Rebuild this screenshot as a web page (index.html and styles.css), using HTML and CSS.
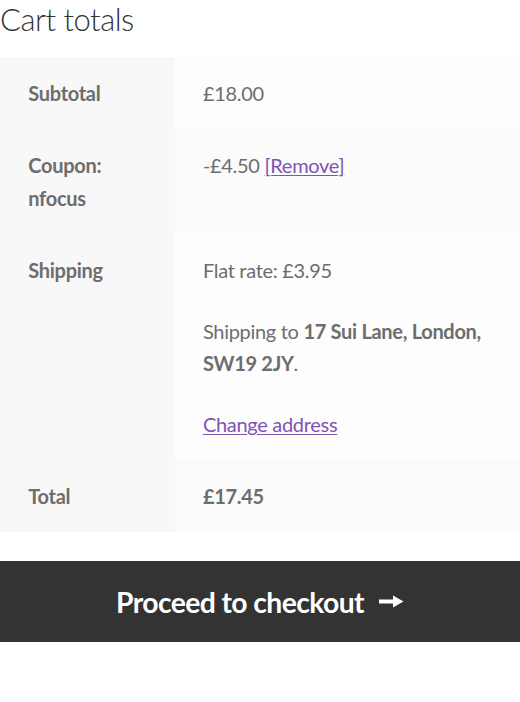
FILE: index.html
```html
<!DOCTYPE html>
<html lang="en">
<head>
<meta charset="utf-8">
<title>Cart totals</title>
<link rel="stylesheet" href="styles.css">
</head>
<body>
<div class="cart-totals">
  <h2 class="cart-title">Cart totals</h2>
  <table class="totals-table">
    <tbody>
      <tr class="row row-odd">
        <th class="label">Subtotal</th>
        <td class="value">£18.00</td>
      </tr>
      <tr class="row row-even">
        <th class="label">Coupon: nfocus</th>
        <td class="value">-£4.50 <a class="link" href="#">[Remove]</a></td>
      </tr>
      <tr class="row row-odd">
        <th class="label">Shipping</th>
        <td class="value">
          <p class="para">Flat rate: £3.95</p>
          <p class="para">Shipping to <strong class="strong">17 Sui Lane, London,</strong> <strong class="strong">SW19 2JY</strong>.</p>
          <p class="para para-last"><a class="link" href="#">Change address</a></p>
        </td>
      </tr>
      <tr class="row row-even">
        <th class="label">Total</th>
        <td class="value"><strong class="strong">£17.45</strong></td>
      </tr>
    </tbody>
  </table>
  <a class="checkout-button" href="#">
    <span class="checkout-text">Proceed to checkout</span>
    <svg class="checkout-arrow" width="25" height="13" viewBox="0 0 25 13" aria-hidden="true">
      <rect x="0" y="4.5" width="15" height="4" fill="#ffffff"/>
      <polygon points="14,0.5 24.5,6.5 14,12.5" fill="#ffffff"/>
    </svg>
  </a>
</div>
</body>
</html>
```

FILE: styles.css
```css
html, body {
  margin: 0;
  padding: 0;
  background: #ffffff;
}

body {
  font-family: "Source Sans Pro", Lato, "Liberation Sans", sans-serif;
  color: #6d6d6d;
  font-size: 20px;
}

.cart-totals {
  width: 520px;
}

.cart-title {
  margin: 0 0 18px 0;
  font-size: 31px;
  line-height: 39px;
  font-weight: 300;
  color: #333333;
  letter-spacing: -0.5px;
}

.totals-table {
  width: 100%;
  border-collapse: collapse;
  border-spacing: 0;
  margin: 0 0 29px 0;
}

.label,
.value {
  text-align: left;
  vertical-align: top;
  padding: 20px 28.3px;
  line-height: 32.36px;
  font-size: 20px;
  letter-spacing: -0.3px;
}

.label {
  width: 118px;
  background: #f8f8f8;
  font-weight: 700;
  color: #6d6d6d;
}

.value {
  background: #fdfdfd;
  font-weight: 400;
}

.row-even .value {
  background: #fbfbfb;
}

.para {
  margin: 0 0 28.3px 0;
}

.para-last {
  margin-bottom: 0;
}

.strong {
  font-weight: 700;
}

.link {
  color: #7f54b3;
  text-decoration: underline;
  text-decoration-thickness: 1px;
  text-underline-offset: 2px;
}

.checkout-button {
  display: flex;
  justify-content: center;
  align-items: center;
  gap: 15px;
  height: 81px;
  background: #333333;
  color: #ffffff;
  text-decoration: none;
  font-size: 28.3px;
  font-weight: 700;
  line-height: 46px;
  letter-spacing: -0.6px;
}

.checkout-text {
  display: block;
}

.checkout-arrow {
  display: block;
  margin-top: -1px;
}
```
